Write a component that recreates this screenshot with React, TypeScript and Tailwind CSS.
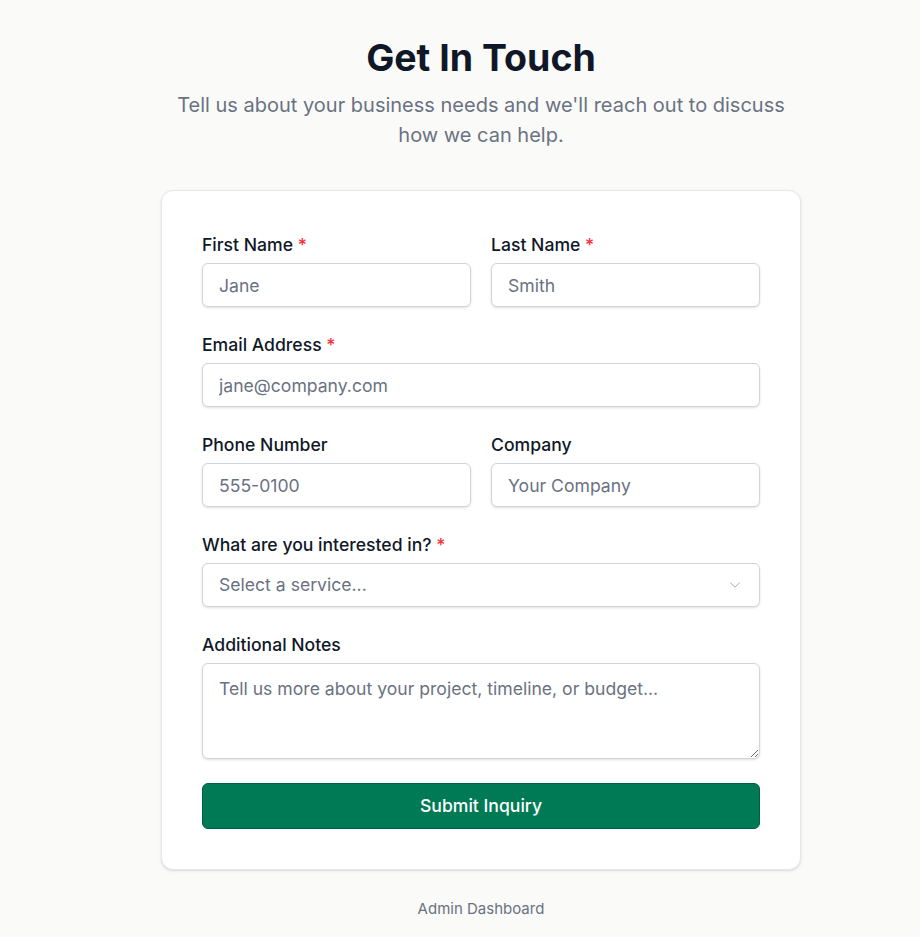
import { ChevronDown } from 'lucide-react';

const boxCls = 'w-full h-11 px-4 rounded-md border border-gray-300 bg-white shadow-sm text-[17.6px] outline-none';
const inputCls = boxCls + ' text-gray-900 placeholder:text-gray-500';

function Label({ text, required }: { text: string; required?: boolean }) {
  return (
    <label className="block mb-1 text-[17.6px] font-medium text-gray-900 leading-7">
      {text}
      {required && <span className="text-red-500"> *</span>}
    </label>
  );
}

export default function App() {
  return (
    <div className="min-h-screen bg-stone-50 text-gray-900 pl-[42px]" style={{ fontFamily: 'Inter, "Noto Sans", sans-serif' }}>
      <div className="max-w-[640px] mx-auto pt-[38px] pb-6">
        <h1 className="text-[37.5px] leading-10 font-bold text-center text-gray-900">Get In Touch</h1>
        <p className="mt-3 text-xl leading-[30px] text-center text-gray-500">
          Tell us about your business needs and we'll reach out to discuss how we can help.
        </p>

        <form className="mt-10 bg-white border border-gray-200 rounded-xl shadow-sm p-10 flex flex-col gap-6">
          <div className="grid grid-cols-2 gap-5">
            <div>
              <Label text="First Name" required />
              <input className={inputCls} placeholder="Jane" />
            </div>
            <div>
              <Label text="Last Name" required />
              <input className={inputCls} placeholder="Smith" />
            </div>
          </div>

          <div>
            <Label text="Email Address" required />
            <input className={inputCls} placeholder="jane@company.com" />
          </div>

          <div className="grid grid-cols-2 gap-5">
            <div>
              <Label text="Phone Number" />
              <input className={inputCls} placeholder="555-0100" />
            </div>
            <div>
              <Label text="Company" />
              <input className={inputCls} placeholder="Your Company" />
            </div>
          </div>

          <div>
            <Label text="What are you interested in?" required />
            <div className="relative">
              <div className={boxCls + ' flex items-center text-gray-500'}>Select a service...</div>
              <ChevronDown size={18} strokeWidth={1.25} className="absolute right-4 top-1/2 -translate-y-1/2 text-gray-400" />
            </div>
          </div>

          <div>
            <Label text="Additional Notes" />
            <textarea
              rows={3}
              className="block w-full h-24 px-4 py-3 rounded-md border border-gray-300 bg-white shadow-sm text-[17.6px] text-gray-900 placeholder:text-gray-500 outline-none"
              placeholder="Tell us more about your project, timeline, or budget..."
            />
          </div>

          <button
            type="button"
            className="h-[46px] w-full rounded-md bg-emerald-700 border border-emerald-800 text-white text-[17.6px] font-medium"
          >
            Submit Inquiry
          </button>
        </form>

        <p className="mt-7 text-center text-[15px] text-gray-500">Admin Dashboard</p>
      </div>
    </div>
  );
}
